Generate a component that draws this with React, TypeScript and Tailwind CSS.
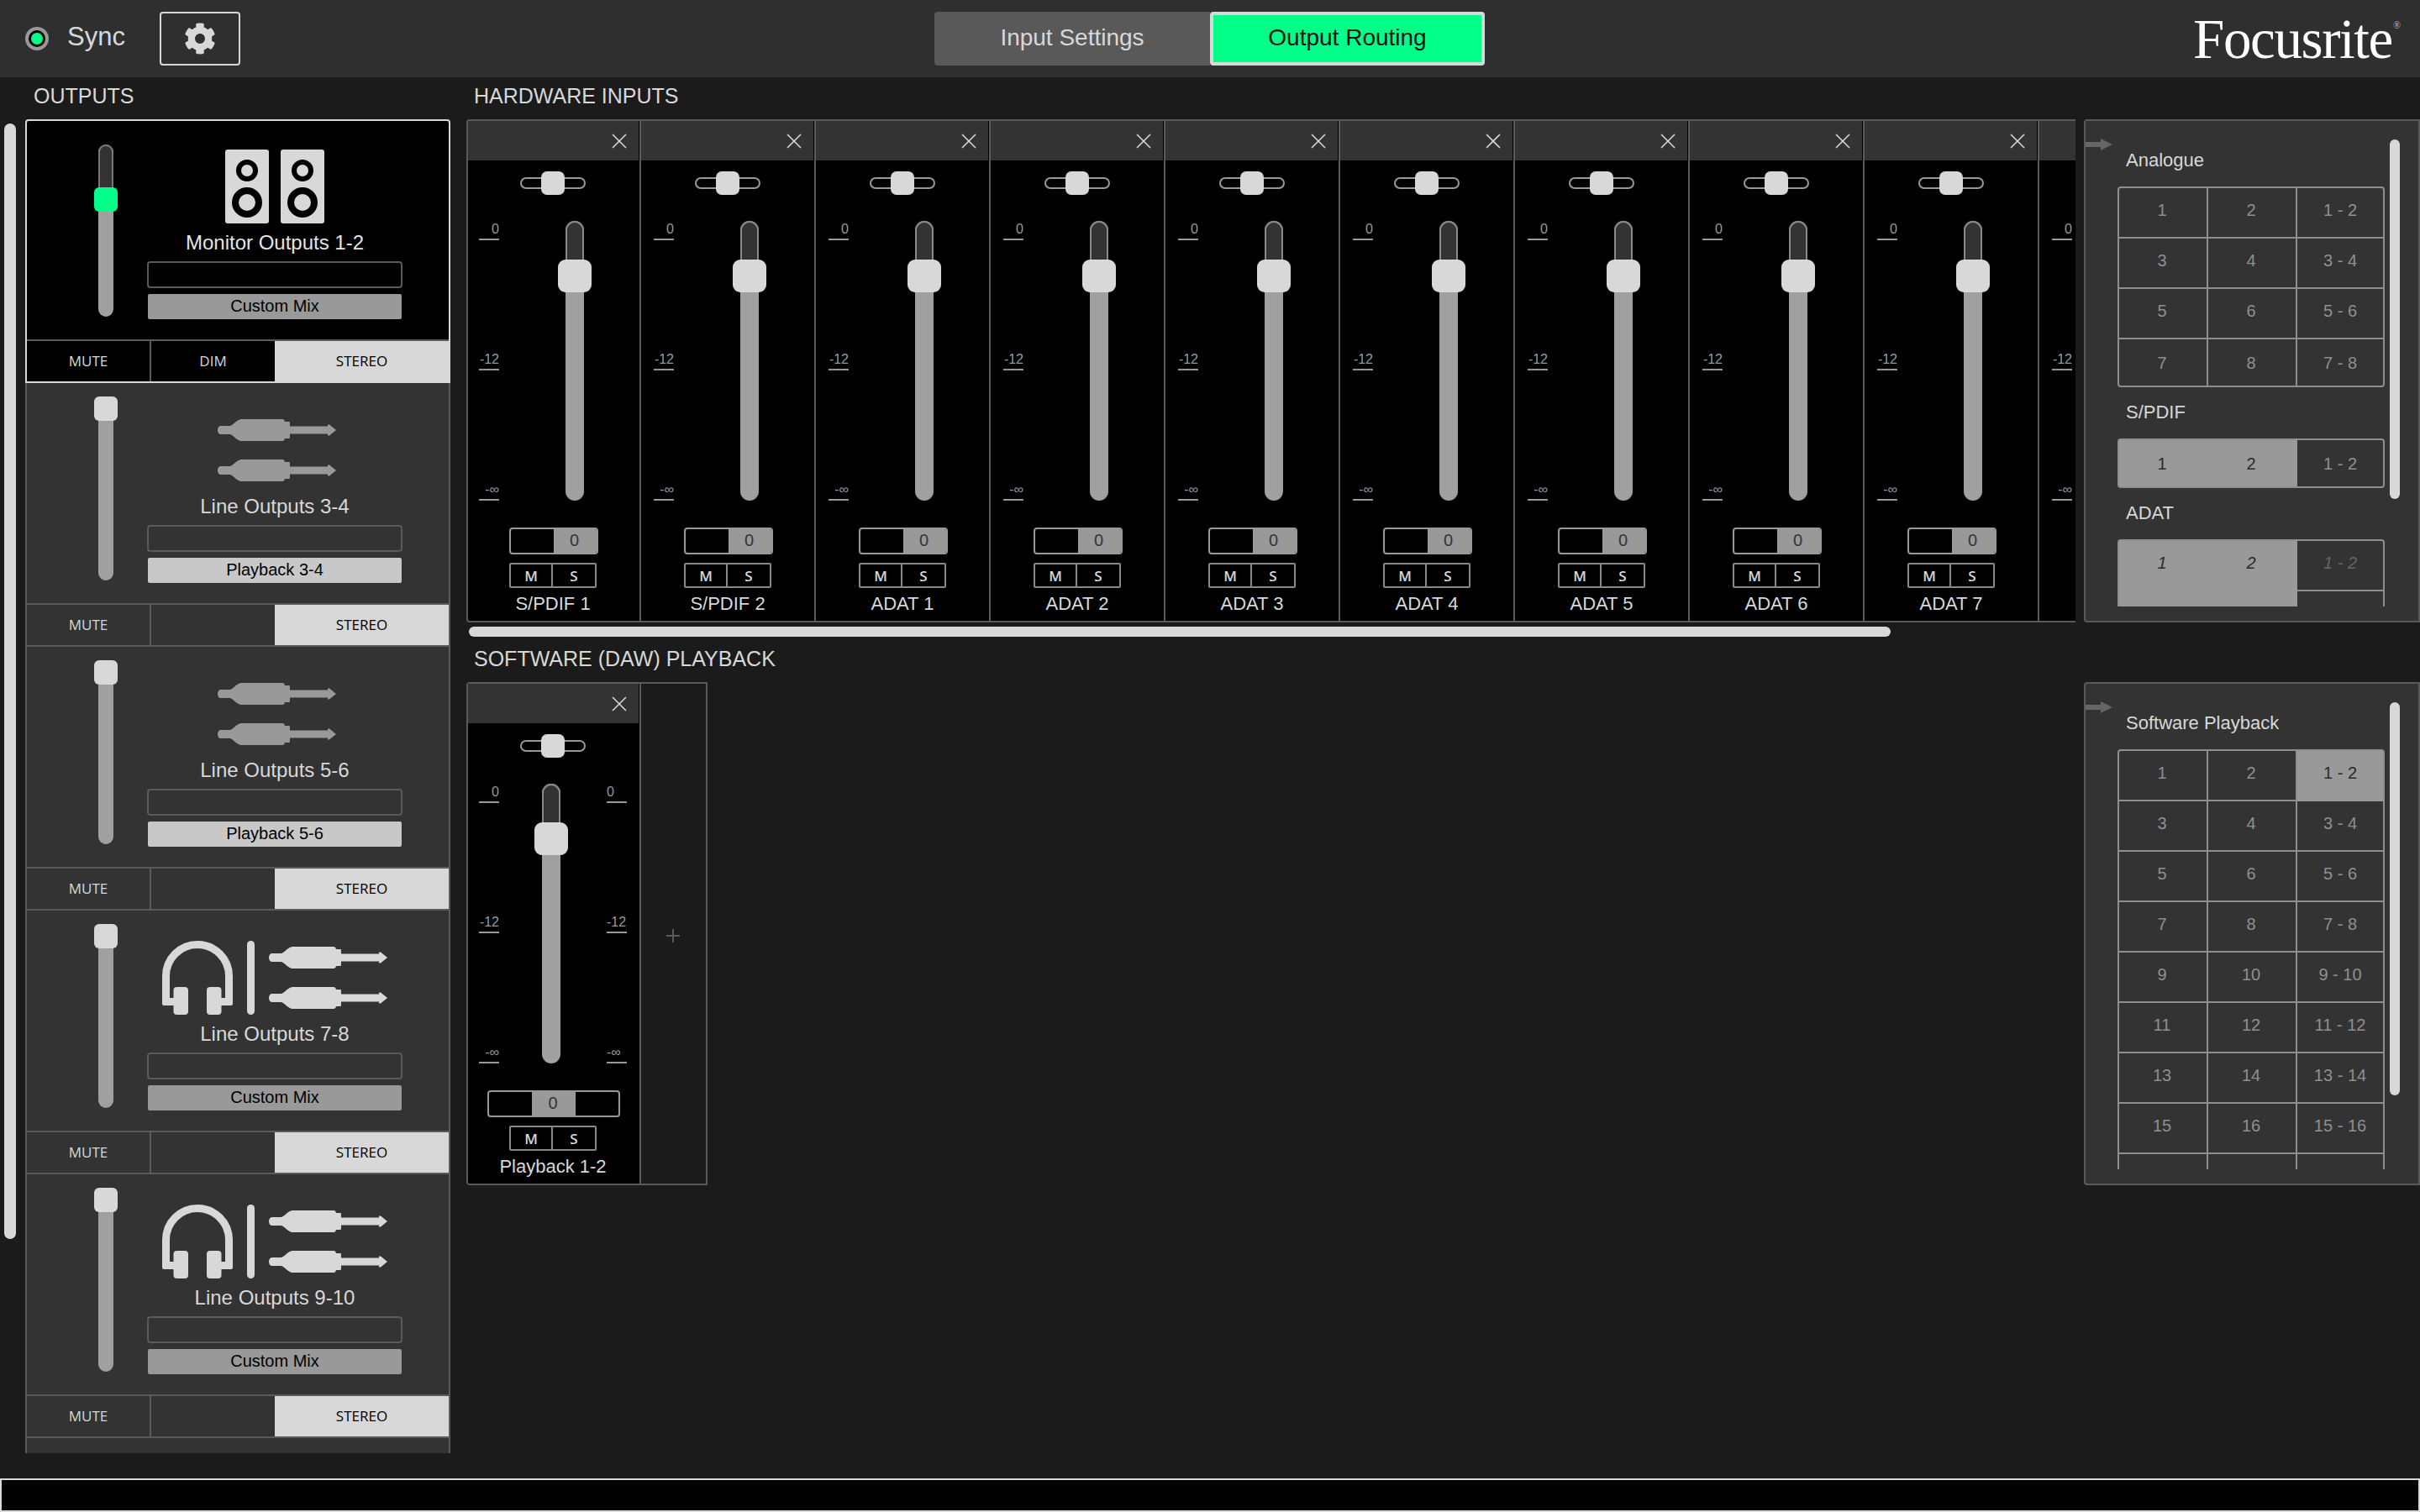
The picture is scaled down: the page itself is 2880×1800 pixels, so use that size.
import { FaCog } from "react-icons/fa";

const OUTPUTS = [
  { name: "Monitor Outputs 1-2", source: "Custom Mix", icon: "speakers", selected: true },
  { name: "Line Outputs 3-4", source: "Playback 3-4", icon: "jacks" },
  { name: "Line Outputs 5-6", source: "Playback 5-6", icon: "jacks" },
  { name: "Line Outputs 7-8", source: "Custom Mix", icon: "both" },
  { name: "Line Outputs 9-10", source: "Custom Mix", icon: "both" },
];

const INPUTS = ["S/PDIF 1", "S/PDIF 2", "ADAT 1", "ADAT 2", "ADAT 3", "ADAT 4", "ADAT 5", "ADAT 6", "ADAT 7", "ADAT 8"];

const BLANK_ROW = ["", "", ""];

function Speaker() {
  return (
    <svg width="52" height="88" viewBox="0 0 52 88">
      <rect width="52" height="88" rx="3" fill="#d8d8d8" />
      <circle cx="26" cy="25" r="10" fill="none" stroke="#000" strokeWidth="6" />
      <circle cx="26" cy="63" r="14" fill="none" stroke="#000" strokeWidth="8" />
    </svg>
  );
}

function Jack({ color }: { color: string }) {
  return (
    <svg width="141" height="26" viewBox="0 0 141 26" className="block">
      <path
        fill={color}
        d="M4 8H15C18 7 21 3 24 1.5 26 .5 27 0 29 0H77C79 0 79.5 1 80 3H85C86 3 86 4 86 8.5H131V6.5L133 6.5 141 13 133 19.5 131 19.5V17.5H86C86 22 86 23 85 23H80C79.5 25 79 26 77 26H29C27 26 26 25.5 24 24.5 21 23 18 19 15 18H4C1.5 18 0 16 0 13S1.5 8 4 8Z"
      />
    </svg>
  );
}

function Jacks({ color, className }: { color: string; className?: string }) {
  return (
    <div className={`flex flex-col gap-[22px] ${className ?? ""}`}>
      <Jack color={color} />
      <Jack color={color} />
    </div>
  );
}

function Headphones() {
  return (
    <svg width="84" height="88" viewBox="0 0 84 88">
      <path d="M4.5 74V42a37.5 37.5 0 0 1 75 0V74" fill="none" stroke="#d8d8d8" strokeWidth="9" strokeLinejoin="round" />
      <rect x="0" y="68" width="16" height="9" rx="2" fill="#d8d8d8" />
      <rect x="68" y="68" width="16" height="9" rx="2" fill="#d8d8d8" />
      <rect x="13.5" y="55" width="17.5" height="33" rx="4" fill="#d8d8d8" />
      <rect x="53" y="55" width="17.5" height="33" rx="4" fill="#d8d8d8" />
    </svg>
  );
}

function OutputIcon({ icon }: { icon: string }) {
  if (icon === "speakers") {
    return (
      <div className="flex gap-[14px]">
        <Speaker />
        <Speaker />
      </div>
    );
  }
  if (icon === "jacks") {
    return <Jacks color="#999999" className="ml-[5px] pt-[7px]" />;
  }
  return (
    <div className="flex items-start">
      <Headphones />
      <div className="ml-[17px] mr-[17px] w-[9px] h-[88px] rounded-full bg-[#d8d8d8]" />
      <Jacks color="#d8d8d8" className="pt-[7px]" />
    </div>
  );
}

function OutputStrip({ name, source, icon, selected }: { name: string; source: string; icon: string; selected?: boolean }) {
  const sourceBg = source === "Custom Mix" ? "bg-[#999999]" : "bg-[#c8c8c8]";
  return (
    <div
      className={
        selected
          ? "shrink-0 h-[314px] flex flex-col border-2 border-[#d8d8d8] rounded-t-[4px] bg-black"
          : "shrink-0 h-[314px] flex flex-col border-x-2 border-b-2 border-[#5a5a5a] bg-[#333333]"
      }
    >
      <div className={selected ? "h-[260px] flex" : "h-[262px] flex"}>
        <div className={`relative ml-[85px] w-[18px] h-[205px] rounded-full bg-[#a0a0a0] ${selected ? "mt-[28px]" : "mt-[30px]"}`}>
          {selected && <div className="absolute inset-x-0 top-0 h-[60px] rounded-t-full bg-[#333333] border-2 border-[#777777]" />}
          <div
            className={`absolute left-[-5px] w-[28px] h-[29px] rounded-[6px] ${
              selected ? "top-[51px] bg-[#00ff88]" : "top-[-14px] bg-[#d8d8d8]"
            }`}
          />
        </div>
        <div className={`ml-[40px] w-[304px] flex flex-col ${selected ? "pt-[34px]" : "pt-[36px]"}`}>
          <div className="h-[88px] flex justify-center">
            <OutputIcon icon={icon} />
          </div>
          <div className={`h-[45px] pt-[1px] flex items-center justify-center text-[24px] ${selected ? "text-[#e4e4e4]" : "text-[#d8d8d8]"}`}>
            {name}
          </div>
          <div className="h-[32px] rounded-[4px] border-2 border-[#5a5a5a]" />
          <div className={`mt-[7px] mx-[1px] h-[30px] pb-[2px] rounded-[2px] flex items-center justify-center text-[20px] text-black ${sourceBg}`}>
            {source}
          </div>
        </div>
      </div>
      <div className="h-[50px] flex border-t-2 border-[#5a5a5a] font-['Open_Sans',sans-serif] font-medium text-[17px] text-[#d8d8d8]">
        <div className="w-[148px] flex items-center justify-center border-r-2 border-[#5a5a5a]">MUTE</div>
        <div className="w-[147px] flex items-center justify-center">{selected ? "DIM" : ""}</div>
        <div className="flex-1 flex items-center justify-center bg-[#d8d8d8] text-black">STEREO</div>
      </div>
    </div>
  );
}

function ScaleMark({ label, right }: { label: string; right?: boolean }) {
  return (
    <div
      className={`w-[24px] h-[23px] flex items-end border-b-2 border-[#999999] pb-[3px] text-[16px] text-[#999999] leading-none ${
        right ? "justify-start" : "justify-end"
      }`}
    >
      {label}
    </div>
  );
}

function Scale({ right }: { right?: boolean }) {
  return (
    <div className="h-[333px] flex flex-col justify-between">
      <ScaleMark label="0" right={right} />
      <ScaleMark label="-12" right={right} />
      <ScaleMark label="-∞" right={right} />
    </div>
  );
}

function ChannelStrip({ name, stereo }: { name: string; stereo?: boolean }) {
  return (
    <div className="shrink-0 w-[208px] h-[595px] flex flex-col bg-black border-r-2 border-[#5a5a5a]">
      <div className="h-[47px] mr-[1px] flex items-center justify-end pr-[14px] bg-[#333333]">
        <svg width="18" height="18" viewBox="0 0 18 18" stroke="#d8d8d8" strokeWidth="1.6">
          <path d="M1 1 17 17M17 1 1 17" />
        </svg>
      </div>
      <div className="relative ml-[64px] mt-[13px] h-[28px] w-[78px] flex items-center">
        <div className="w-full h-[14px] rounded-full border-2 border-[#999999]" />
        <div className="absolute left-[25px] top-0 w-[28px] h-[28px] rounded-[7px] bg-[#d8d8d8]" />
      </div>
      <div className="mt-[31px] ml-[15px] h-[333px] flex">
        <Scale />
        <div className={`relative w-[22px] h-[333px] rounded-full bg-[#a0a0a0] ${stereo ? "ml-[51px]" : "ml-[79px]"}`}>
          <div className="absolute inset-x-0 top-0 h-[60px] rounded-t-full bg-[#333333] border-2 border-[#888888]" />
          <div className="absolute left-[-9px] top-[46px] w-[40px] h-[39px] rounded-[9px] bg-[#d8d8d8]" />
        </div>
        {stereo && (
          <div className="ml-[55px]">
            <Scale right />
          </div>
        )}
      </div>
      <div
        className={`mt-[32px] h-[32px] flex overflow-hidden rounded-[4px] border-2 border-[#999999] text-[20px] text-[#333333] ${
          stereo ? "ml-[25px] w-[158px]" : "ml-[51px] w-[106px]"
        }`}
      >
        <div className="w-[51px]" />
        <div className={`h-full pb-[3px] pr-[2px] flex items-center justify-center bg-[#999999] ${stereo ? "w-[52px]" : "flex-1"}`}>0</div>
      </div>
      <div className="mt-[10px] ml-[51px] w-[104px] h-[30px] flex rounded-[2px] border-2 border-[#888888] font-['Open_Sans',sans-serif] font-semibold text-[17px] text-[#d8d8d8]">
        <div className="w-[50px] pt-[1px] flex items-center justify-center border-r-2 border-[#888888]">M</div>
        <div className="flex-1 pt-[1px] flex items-center justify-center">S</div>
      </div>
      <div className="h-[36px] flex items-center justify-center text-[22px] text-[#d8d8d8]">{name}</div>
    </div>
  );
}

function RouteGrid({ rows, filled, italic }: { rows: string[][]; filled: string[]; italic?: boolean }) {
  return (
    <div className="grid grid-cols-[106px_106px_102px] rounded-[4px] border-2 border-[#8f8f8f] text-[20px]">
      {rows.flatMap((row, r) =>
        row.map((cell, c) => {
          const on = filled.includes(`${r}:${c}`);
          const last = r === rows.length - 1;
          return (
            <div
              key={`${r}:${c}`}
              className={`flex items-center justify-center ${last ? "h-[55px]" : "h-[60px] pb-[6px] border-b-2"} ${
                c < 2 ? "border-r-2 pr-[2px]" : ""
              } ${on ? "bg-[#999999] border-[#999999] text-[#2b2b2b]" : "border-[#8f8f8f] text-[#8f8f8f]"} ${
                italic ? "italic" : ""
              } ${italic && !on ? "text-[#666666]" : ""}`}
            >
              {cell}
            </div>
          );
        })
      )}
    </div>
  );
}

function SectionLabel({ children, first }: { children: string; first?: boolean }) {
  return (
    <div className={`flex items-center pl-[10px] text-[22px] text-[#d8d8d8] ${first ? "h-[52px] pb-[12px]" : "h-[61px] pb-[3px]"}`}>
      {children}
    </div>
  );
}

function RoutePanel({ thumb, children }: { thumb: number; children: React.ReactNode }) {
  return (
    <div className="relative h-[599px] flex rounded-l-[4px] border-2 border-[#5a5a5a] bg-[#333333]">
      <svg width="32" height="14" viewBox="0 0 32 14" className="absolute left-0 top-[21px]">
        <path d="M0 4H18V0L32 7 18 14V10H0Z" fill="#666666" />
      </svg>
      <div className="ml-[38px] w-[318px] h-[578px] overflow-hidden pt-[26px]">{children}</div>
      <div className="ml-[6px] mt-[22px] w-[12px] rounded-full bg-[#d8d8d8]" style={{ height: thumb }} />
    </div>
  );
}

function numberRows(count: number) {
  const rows: string[][] = [];
  for (let i = 0; i < count; i++) {
    const a = i * 2 + 1;
    rows.push([`${a}`, `${a + 1}`, `${a} - ${a + 1}`]);
  }
  return rows;
}

export default function App() {
  return (
    <div className="w-[2880px] h-[1800px] flex flex-col overflow-hidden bg-[#1b1b1b] font-['Liberation_Sans',Arial,sans-serif]">
      <header className="h-[92px] shrink-0 flex items-center bg-[#2f2f2f] pl-[30px] pr-[23px]">
        <div className="w-[28px] h-[28px] flex items-center justify-center rounded-full border-4 border-[#999999] bg-black">
          <div className="w-[14px] h-[14px] rounded-full bg-[#00ff88]" />
        </div>
        <div className="ml-[22px] w-[110px] pb-[3px] text-[31px] text-[#d8d8d8]">Sync</div>
        <div className="w-[96px] h-[64px] flex items-center justify-center rounded-[4px] border-2 border-[#d8d8d8]">
          <FaCog className="text-[38px] text-[#d8d8d8]" />
        </div>
        <div className="ml-[826px] flex h-[64px] text-[28px]">
          <div className="w-[328px] pb-[2px] flex items-center justify-center rounded-l-[4px] bg-[#595959] text-[#d8d8d8]">Input Settings</div>
          <div className="w-[327px] pb-[2px] flex items-center justify-center rounded-[4px] border-4 border-[#d8d8d8] bg-[#00ff88] text-[#111111]">
            Output Routing
          </div>
        </div>
        <div className="ml-auto flex items-start font-['Liberation_Serif',serif] text-white">
          <span className="text-[67px] tracking-[-1.4px] leading-none">Focusrite</span>
          <span className="ml-[1px] mt-[11px] text-[12px] text-[#bbbbbb] leading-none">®</span>
        </div>
      </header>

      <main className="h-[1668px] flex">
        <div className="w-[555px] shrink-0 flex flex-col">
          <div className="h-[50px] flex items-center pl-[40px] pb-[5px] text-[25px] text-[#d8d8d8]">OUTPUTS</div>
          <div className="flex">
            <div className="ml-[5px] mt-[5px] w-[14px] h-[1328px] rounded-full bg-[#d8d8d8]" />
            <div className="ml-[11px] w-[506px] h-[1588px] flex flex-col overflow-hidden">
              {OUTPUTS.map((o) => (
                <OutputStrip key={o.name} {...o} />
              ))}
              <div className="flex-1 border-x-2 border-[#5a5a5a] bg-[#333333]" />
            </div>
          </div>
        </div>

        <div className="w-[1915px] shrink-0 flex flex-col">
          <div className="h-[50px] flex items-center pl-[9px] pb-[4px] text-[25px] text-[#d8d8d8]">HARDWARE INPUTS</div>
          <div className="h-[599px] overflow-hidden rounded-l-[4px] border-y-2 border-l-2 border-[#5a5a5a]">
            <div className="flex ml-[-2px]">
              {INPUTS.map((n) => (
                <ChannelStrip key={n} name={n} />
              ))}
            </div>
          </div>
          <div className="mt-[5px] ml-[3px] w-[1692px] h-[12px] rounded-full bg-[#d8d8d8]" />
          <div className="h-[54px] flex items-center pl-[9px] pb-[1px] text-[25px] text-[#d8d8d8]">SOFTWARE (DAW) PLAYBACK</div>
          <div className="w-[287px] h-[599px] flex overflow-hidden rounded-l-[4px] border-2 border-[#5a5a5a]">
            <div className="ml-[-2px]">
              <ChannelStrip name="Playback 1-2" stereo />
            </div>
            <div className="flex-1 flex items-center justify-center pr-[2px] pt-[5px]">
              <svg width="16" height="16" viewBox="0 0 16 16" stroke="#5a5a5a" strokeWidth="2">
                <path d="M8 0V16M0 8H16" />
              </svg>
            </div>
          </div>
        </div>

        <div className="ml-[10px] w-[400px] shrink-0 flex flex-col pt-[50px] gap-[71px]">
          <RoutePanel thumb={428}>
            <SectionLabel first>Analogue</SectionLabel>
            <RouteGrid rows={numberRows(4)} filled={[]} />
            <SectionLabel>S/PDIF</SectionLabel>
            <RouteGrid rows={numberRows(1)} filled={["0:0", "0:1"]} />
            <SectionLabel>ADAT</SectionLabel>
            <RouteGrid rows={[...numberRows(1), BLANK_ROW]} filled={["0:0", "0:1", "1:0", "1:1"]} italic />
          </RoutePanel>
          <RoutePanel thumb={468}>
            <SectionLabel first>Software Playback</SectionLabel>
            <RouteGrid rows={[...numberRows(8), BLANK_ROW]} filled={["0:2"]} />
          </RoutePanel>
        </div>
      </main>

      <div className="h-[40px] shrink-0 border-2 border-[#d8d8d8] bg-black" />
    </div>
  );
}
